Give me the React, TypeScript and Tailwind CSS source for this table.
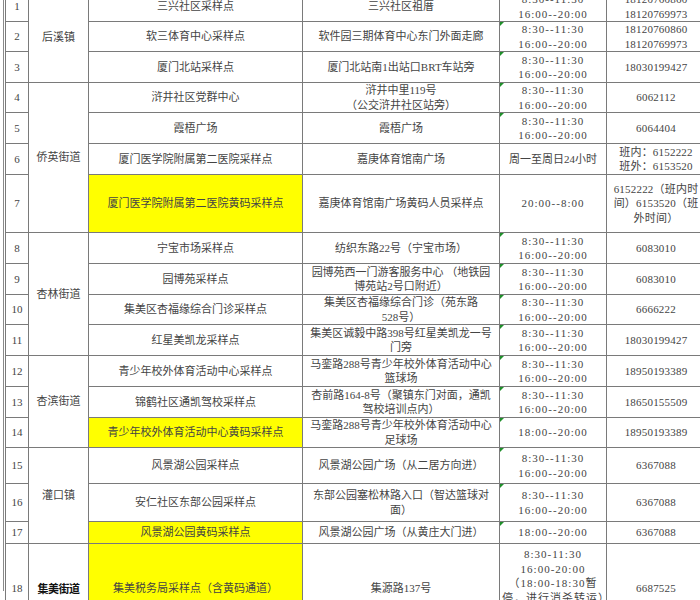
import React from 'react';

type Row = {
  n: number;
  name: string;
  yellow?: boolean;
  addr: string[];
  time: string[];
  phone: string[];
  h: string;
  mark?: boolean;
  plainTime?: boolean;
  timeTop?: boolean;
};

const T = ['8:30--11:30', '16:00--20:00'];

const rows: Row[] = [
  { n: 1, name: '三兴社区采样点', addr: ['三兴社区祖厝'], time: T, phone: ['18120760860', '18120769973'], h: 'h-[30px]' },
  { n: 2, name: '软三体育中心采样点', addr: ['软件园三期体育中心东门外面走廊'], time: T, phone: ['18120760860', '18120769973'], h: 'h-[30px]', mark: true },
  { n: 3, name: '厦门北站采样点', addr: ['厦门北站南1出站口BRT车站旁'], time: T, phone: ['18030199427'], h: 'h-[31px]', mark: true },
  { n: 4, name: '浒井社区党群中心', addr: ['浒井中里119号', '（公交浒井社区站旁）'], time: T, phone: ['6062112'], h: 'h-[30px]', mark: true },
  { n: 5, name: '霞梧广场', addr: ['霞梧广场'], time: T, phone: ['6064404'], h: 'h-[31px]', mark: true },
  { n: 6, name: '厦门医学院附属第二医院采样点', addr: ['嘉庚体育馆南广场'], time: ['周一至周日24小时'], phone: ['班内：6152222', '班外：6153520'], h: 'h-[31px]', plainTime: true },
  { n: 7, name: '厦门医学院附属第二医院黄码采样点', yellow: true, addr: ['嘉庚体育馆南广场黄码人员采样点'], time: ['20:00--8:00'], phone: ['6152222（班内时', '间）6153520（班', '外时间）'], h: 'h-[58px]' },
  { n: 8, name: '宁宝市场采样点', addr: ['纺织东路22号（宁宝市场）'], time: T, phone: ['6083010'], h: 'h-[31px]', mark: true },
  { n: 9, name: '园博苑采样点', addr: ['园博苑西一门游客服务中心 （地铁园', '博苑站2号口附近）'], time: T, phone: ['6083010'], h: 'h-[31px]', mark: true },
  { n: 10, name: '集美区杏福缘综合门诊采样点', addr: ['集美区杏福缘综合门诊（苑东路', '528号）'], time: T, phone: ['6666222'], h: 'h-[30px]', mark: true },
  { n: 11, name: '红星美凯龙采样点', addr: ['集美区诚毅中路398号红星美凯龙一号', '门旁'], time: T, phone: ['18030199427'], h: 'h-[31px]', mark: true },
  { n: 12, name: '青少年校外体育活动中心采样点', addr: ['马銮路288号青少年校外体育活动中心', '篮球场'], time: T, phone: ['18950193389'], h: 'h-[31px]', mark: true },
  { n: 13, name: '锦鹤社区通凯驾校采样点', addr: ['杏前路164-8号（聚镇东门对面，通凯', '驾校培训点内）'], time: T, phone: ['18650155509'], h: 'h-[31px]', mark: true },
  { n: 14, name: '青少年校外体育活动中心黄码采样点', yellow: true, addr: ['马銮路288号青少年校外体育活动中心', '足球场'], time: ['18:00--20:00'], phone: ['18950193389'], h: 'h-[30px]', mark: true },
  { n: 15, name: '风景湖公园采样点', addr: ['风景湖公园广场（从二居方向进）'], time: T, phone: ['6367088'], h: 'h-[36px]', mark: true },
  { n: 16, name: '安仁社区东部公园采样点', addr: ['东部公园塞松林路入口（智达篮球对', '面）'], time: T, phone: ['6367088'], h: 'h-[38px]', mark: true },
  { n: 17, name: '风景湖公园黄码采样点', yellow: true, addr: ['风景湖公园广场（从黄庄大门进）'], time: ['18:00--20:00'], phone: ['6367088'], h: 'h-[22px]', mark: true },
  { n: 18, name: '集美税务局采样点（含黄码通道）', yellow: true, addr: ['集源路137号'], time: ['8:30-11:30', '16:00-20:00', '（18:00-18:30暂', '停，进行消杀转运）'], phone: ['6687525'], h: 'h-[90px]', timeTop: true },
];

// district cell sits on the first row of each group
const districts: Record<number, { label: string; span: number; bold?: boolean }> = {
  1: { label: '后溪镇', span: 3 },
  4: { label: '侨英街道', span: 4 },
  8: { label: '杏林街道', span: 4 },
  12: { label: '杏滨街道', span: 3 },
  15: { label: '灌口镇', span: 3 },
  18: { label: '集美街道', span: 1, bold: true },
};

const Lines = ({ items }: { items: string[] }) => (
  <>
    {items.map((s, i) => (
      <React.Fragment key={i}>
        {i > 0 && <br />}
        {s}
      </React.Fragment>
    ))}
  </>
);

const cell = 'border border-[#7a7a7a] p-0 px-[2px] text-center whitespace-nowrap';

export default function App() {
  return (
    <div className="w-[700px] h-[600px] overflow-hidden bg-white pl-[3px] font-['Liberation_Serif','Noto_Sans_CJK_SC',serif] text-[11px] leading-[14.5px] text-[#444]">
      <div className="border-l border-[#8a8a8a] pl-[1px] h-full">
        <table className="table-fixed border-collapse w-[700px] mt-[-9px]">
          <colgroup>
            <col className="w-[23px]" />
            <col className="w-[60px]" />
            <col className="w-[214px]" />
            <col className="w-[197px]" />
            <col className="w-[107px]" />
            <col className="w-[99px]" />
          </colgroup>
          <tbody>
            {rows.map((r) => {
              const d = districts[r.n];
              return (
                <tr key={r.n} className={r.h}>
                  <td className={`${cell} align-middle`}>{r.n}</td>
                  {d && (
                    <td
                      rowSpan={d.span}
                      className={`${cell} align-middle ${
                        d.bold ? "font-['Noto_Sans_CJK_SC',sans-serif] font-bold text-[#111] tracking-[-0.5px]" : ''
                      }`}
                    >
                      {d.label}
                    </td>
                  )}
                  <td className={`${cell} align-middle ${r.yellow ? 'bg-[#ffff00]' : ''}`}>{r.name}</td>
                  <td className={`${cell} align-middle`}>
                    <Lines items={r.addr} />
                  </td>
                  <td
                    className={`${cell} relative ${r.plainTime ? '' : 'tracking-[1px]'} ${
                      r.timeTop ? 'align-top pt-[3px]' : 'align-middle'
                    }`}
                  >
                    {r.mark && (
                      <span className="absolute left-0 top-0 w-0 h-0 border-t-[4px] border-r-[4px] border-t-[#1f8f2a] border-r-transparent" />
                    )}
                    <Lines items={r.time} />
                  </td>
                  <td className={`${cell} align-middle tracking-[0.2px]`}>
                    <Lines items={r.phone} />
                  </td>
                </tr>
              );
            })}
          </tbody>
        </table>
      </div>
    </div>
  );
}
